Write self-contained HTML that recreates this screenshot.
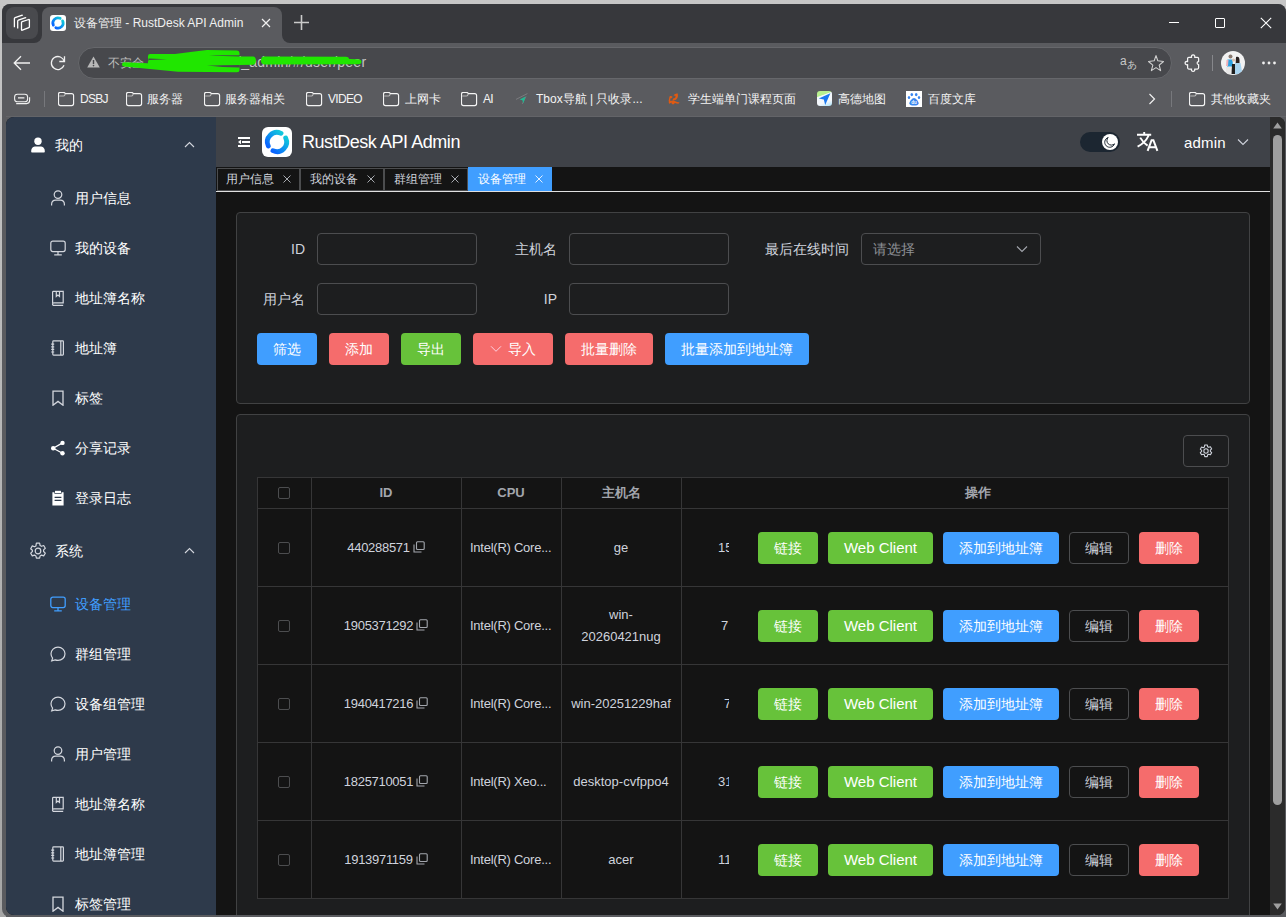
<!DOCTYPE html>
<html><head><meta charset="utf-8">
<style>
*{box-sizing:border-box;margin:0;padding:0}
html,body{width:1286px;height:917px;overflow:hidden;background:linear-gradient(#c6c6c6,#a6a6a6);font-family:"Liberation Sans",sans-serif;position:relative}
.a{position:absolute}
svg{display:block}
#win{left:2px;top:4px;width:1284px;height:913px;background:#5a5b5f;border-radius:8px 8px 0 8px;overflow:hidden}
#tabstrip{left:0;top:0;width:1284px;height:39px;background:#37383c}
#content{left:6px;top:117px;width:1279px;height:798px;background:#141414;border-radius:8px 8px 8px 8px;overflow:hidden}
.bm{color:#f4f4f4;font-size:12px;top:91px;line-height:16px;white-space:nowrap}
#side{left:0;top:0;width:210px;height:798px;background:#2e3a4b}
.mi{position:absolute;left:0;width:210px;height:50px;color:#fff;font-size:14px}
.mi span{position:absolute;left:69px;top:17px;line-height:16px;white-space:nowrap}
.mi svg{position:absolute;left:44px;top:17px}
#hdr{left:210px;top:0;width:1054px;height:50px;background:#3f4248}
#tabs{left:210px;top:50px;width:1054px;height:25px;background:#141414;border-bottom:1px solid #d9d9d9}
.tg{position:absolute;top:0;height:24px;border:1px solid #4c4d4f;background:#141414;color:#cfd3dc;font-size:12px;line-height:22px;padding-left:9px;white-space:nowrap}
.tg i{position:absolute;right:8px;top:6px;width:9px;height:9px}
.card{position:absolute;background:#1d1e1f;border:1px solid #414243;border-radius:4px}
.lbl{position:absolute;color:#cfd3dc;font-size:14px;line-height:16px;text-align:right;white-space:nowrap}
.inp{position:absolute;height:32px;border:1px solid #4c4d4f;border-radius:4px}
.btn{position:absolute;height:32px;border-radius:4px;color:#fff;font-size:14px;line-height:32px;text-align:center;white-space:nowrap}
.bp{background:#409eff}.bd{background:#f56c6c}.bs{background:#67c23a}
.bo{border:1px solid #4c4d4f;color:#cfd3dc;line-height:30px}
#sb{left:1264px;top:0;width:15px;height:798px;background:#2b2b2b;border-radius:0 6px 6px 0}
.cell{position:absolute;color:#cfd3dc;font-size:13px;line-height:22px;text-align:center;white-space:nowrap}
.hl{position:absolute;height:1px;background:#363637}
.vl{position:absolute;width:1px;background:#363637}
.st{color:#fff;font-size:14px;line-height:18px;white-space:nowrap}
.th{color:#a3a6ad;font-size:13px;font-weight:bold;line-height:16px;text-align:center;white-space:nowrap}
.idt{letter-spacing:-.3px}
.cb{position:absolute;width:12px;height:12px;border:1px solid #4c4d4f;border-radius:2px}
</style></head><body>
<div id="win" class="a">

  <div id="tabstrip" class="a"></div>
  <!-- group button -->
  <!-- active tab -->
  <div class="a" style="left:40px;top:3px;width:240px;height:40px;background:#5a5b5f;border-radius:8px 8px 0 0"></div>
  <div class="a" style="left:280px;top:31px;width:8px;height:8px;background:#5a5b5f"></div>
  <div class="a" style="left:280px;top:23px;width:16px;height:16px;background:#37383c;border-radius:0 0 0 8px"></div>
  <div class="a" style="left:32px;top:31px;width:8px;height:8px;background:#5a5b5f"></div>
  <div class="a" style="left:32px;top:31px;width:8px;height:8px;background:#37383c;border-radius:0 0 8px 0"></div>
  <div class="a" style="left:4px;top:3px;width:32px;height:32px;background:#494a4e;border-radius:8px"></div>
  <svg class="a" style="left:-2px;top:-4px" width="40" height="40" viewBox="0 0 40 40" fill="none" stroke="#fff" stroke-width="1.3" stroke-linejoin="round">
    <path d="M14.4 27.2V18.6Q14.4 17.9 15.1 17.6L21.6 15.3Q22.3 15.1 22.7 15.6"/><path d="M17.7 28.4V21.1Q17.7 20.4 18.4 20.1L24.9 17.8Q25.6 17.6 26 18.1"/><path d="M21.5 22.6Q21.5 21.9 22.2 21.7L28.7 19.5Q29.4 19.3 29.4 20V26.8Q29.4 27.4 28.8 27.6L22.4 30.2Q21.5 30.5 21.5 29.8Z"/>
  </svg>
  <!-- favicon -->
  <div class="a" style="left:48px;top:11px;width:16px;height:16px;background:#fff;border-radius:3px"></div>
  <svg class="a" style="left:48px;top:11px" width="16" height="16" viewBox="0 0 30 30"><defs><linearGradient id="lg0" x1="0" y1="1" x2="1" y2="0"><stop offset="0" stop-color="#0a62ff"/><stop offset="1" stop-color="#10c8dc"/></linearGradient></defs>
    <path d="M19.06 6.3A9.6 9.6 0 0 0 6.3 19.06" fill="none" stroke="url(#lg0)" stroke-width="5.2" stroke-linecap="round"/><path d="M10.94 23.7A9.6 9.6 0 0 0 23.7 10.94" fill="none" stroke="url(#lg0)" stroke-width="5.2" stroke-linecap="round"/>
  </svg>
  <div class="a" style="left:72px;top:12px;color:#f0f0f0;font-size:12px;line-height:14px;white-space:nowrap">设备管理 - RustDesk API Admin</div>
  <svg class="a" style="left:259px;top:14px" width="10" height="10" viewBox="0 0 10 10" stroke="#f0f0f0" stroke-width="1.2"><path d="M1 1l8 8M9 1L1 9"/></svg>
  <svg class="a" style="left:292px;top:11px" width="15" height="15" viewBox="0 0 15 15" stroke="#cacaca" stroke-width="1.6"><path d="M7.5 0v15M0 7.5h15"/></svg>
  <!-- window controls -->
  <div class="a" style="left:1167px;top:18px;width:10px;height:1px;background:#fff"></div>
  <div class="a" style="left:1213px;top:14px;width:10px;height:10px;border:1px solid #fff;border-radius:1px"></div>
  <svg class="a" style="left:1258px;top:13px" width="12" height="12" viewBox="0 0 12 12" stroke="#fff" stroke-width="1.1"><path d="M.8.8l10.4 10.4M11.2.8L.8 11.2"/></svg>
  <!-- toolbar -->
  <svg class="a" style="left:11px;top:51px" width="18" height="16" viewBox="0 0 18 16" fill="none" stroke="#f0f0f0" stroke-width="1.3"><path d="M17 8H1.5M8 1.2L1.2 8 8 14.8"/></svg>
  <svg class="a" style="left:48px;top:51px" width="16" height="16" viewBox="0 0 16 16" fill="none" stroke="#f0f0f0" stroke-width="1.3"><path d="M14.2 6.5A6.5 6.5 0 1 0 14 10.2"/><path d="M14.5 1.2V6.5H9.3"/></svg>
  <div class="a" style="left:76px;top:43px;width:1094px;height:32px;background:#47484c;border-radius:16px;border:1px solid #66676b"></div>
  <svg class="a" style="left:85px;top:52px" width="13" height="12" viewBox="0 0 13 12"><path d="M6.5 .5L12.8 11.5H.2z" fill="#b8b8b8"/><path d="M6.5 4v4" stroke="#47484c" stroke-width="1.4"/><circle cx="6.5" cy="9.6" r=".8" fill="#47484c"/></svg>
  <div class="a" style="left:106px;top:52px;color:#bdbdbd;font-size:12px;line-height:14px;white-space:nowrap">不安全</div>
  <div class="a" style="left:227px;top:50px;color:#c4c4c4;font-size:14px;line-height:16px;letter-spacing:.25px;white-space:nowrap">4/_admin/#/user/peer</div>
  <svg class="a" style="left:-2px;top:-4px" width="400" height="90" viewBox="0 0 400 90" fill="#20e600">
    <path d="M150 53.9L175 53.9Q190 52 207 50L237 50.5Q239.5 50.8 239.5 53V55.3H209Q222 56.2 239.5 56.6H253Q256 56.8 256 60.7Q256 64.6 253 64.8L239.5 65V70Q239.5 72.3 237 72.3L178 71.7L124 66.6Q122 66.4 122 64.4Q122 62.3 124 62.3L148 63.2Q147.5 61.5 148.5 60.2Q147.5 58.5 148 56.2Q148 53.9 150 53.9z"/>
    <path d="M148.6 58.4L167 59.3L148.6 60z" fill="#47484c"/><path d="M207 65.6Q220 64.9 239.6 64.9V67.6Q222 67.5 207 65.6z" fill="#47484c"/>
    <path d="M261 60.6Q261 56.8 264 56.6L346 56.8Q349 57 349 59L358 59.3Q361.5 59.5 361.5 61.8Q361.5 64.3 358 64.3L264 64.5Q261 64.3 261 60.6z"/>
  </svg>
  <div class="a" style="left:1118px;top:50px;color:#c8c8c8;font-size:12px;line-height:14px;white-space:nowrap">a</div>
  <div class="a" style="left:1125px;top:55px;color:#c8c8c8;font-size:10px;line-height:12px;white-space:nowrap">あ</div>
  <svg class="a" style="left:-2px;top:-4px" width="1286" height="90" viewBox="0 0 1286 90" fill="none" stroke="#f4f4f4" stroke-width="1.25" stroke-linejoin="round"><path d="M1188.8 57.3H1191.6A1.7 1.7 0 1 1 1194.6 57.3H1197.4Q1198.6 57.3 1198.6 58.5V61.6A1.5 1.5 0 1 0 1198.6 64.6V67.8Q1198.6 69 1197.4 69H1194.6A1.7 1.7 0 1 1 1191.6 69H1188.8Q1187.6 69 1187.6 67.8V64.6A1.7 1.7 0 1 1 1187.6 61.6V58.5Q1187.6 57.3 1188.8 57.3z"/>
  <path d="M1148.5 61.5L1154.2 60.8 1156 55.6 1157.8 60.8 1163.5 61.5 1159.2 65.2 1160.6 70.6 1156 67.6 1151.4 70.6 1152.8 65.2z" stroke="#d0d0d0" stroke-width="1.1"/></svg>
  <div class="a" style="left:1210px;top:51px;width:1px;height:16px;background:#86878b"></div>
  <svg class="a" style="left:1219px;top:47px" width="24" height="24" viewBox="0 0 24 24"><defs><clipPath id="cav"><circle cx="12" cy="12" r="12"/></clipPath></defs><g clip-path="url(#cav)"><rect width="24" height="24" fill="#f2f2f2"/>
  <circle cx="9.5" cy="5.5" r="2" fill="#8a7a70"/><path d="M6.5 8.5h5l.5 7h-6z" fill="#2aa0e0"/><path d="M5.5 9h2l-.5 6h-2z" fill="#f0b0b8"/><path d="M11 13h3l.5 10h-4z" fill="#1e1e1e"/>
  <path d="M15 6c2-1 3.5 0 3.5 3v6h-4z" fill="#2a2222"/><path d="M14 12h5.5l2 11H14z" fill="#a8d4f0"/><circle cx="12.5" cy="9" r="1.6" fill="#d8c0b0"/><path d="M5 16h5v7H5z" fill="#e8e8e8"/></g></svg>
  <svg class="a" style="left:1260px;top:57px" width="14" height="4" viewBox="0 0 14 4" fill="#f0f0f0"><circle cx="1.5" cy="2" r="1.4"/><circle cx="7" cy="2" r="1.4"/><circle cx="12.5" cy="2" r="1.4"/></svg>
  <!-- bookmarks -->
  <svg class="a" style="left:-2px;top:-4px" width="40" height="120" viewBox="0 0 40 120" fill="none" stroke="#f0f0f0" stroke-width="1.1"><rect x="14.6" y="94.2" width="13" height="7.6" rx="2.8"/><path d="M18 97.9h6.4" stroke-width="1.4"/><path d="M16.2 103.6H26.6A3 3 0 0 0 29.6 100.6V97.2"/></svg>
  <div class="a" style="left:42px;top:87px;width:1px;height:16px;background:#77787c"></div>
  <svg class="a" style="left:56px;top:88px" width="17" height="15" viewBox="0 0 17 15" fill="none" stroke="#f4f4f4" stroke-width="1.15"><path d="M.5 2.2Q.5.3 2.4.3H5.2Q6.6.3 7.3 1.6H13.6Q15.6 1.6 15.6 3.6V11.6Q15.6 13.6 13.6 13.6H2.5Q.5 13.6.5 11.6Z"/><path d="M1.2 4H5.6Q6.8 4 7.2 1.8" stroke="#b8b8b8"/></svg>
  <div class="a bm" style="left:78px;top:87px;letter-spacing:-.7px">DSBJ</div>
  <svg class="a" style="left:124px;top:88px" width="17" height="15" viewBox="0 0 17 15" fill="none" stroke="#f4f4f4" stroke-width="1.15"><path d="M.5 2.2Q.5.3 2.4.3H5.2Q6.6.3 7.3 1.6H13.6Q15.6 1.6 15.6 3.6V11.6Q15.6 13.6 13.6 13.6H2.5Q.5 13.6.5 11.6Z"/><path d="M1.2 4H5.6Q6.8 4 7.2 1.8" stroke="#b8b8b8"/></svg>
  <div class="a bm" style="left:145px;top:87px">服务器</div>
  <svg class="a" style="left:202px;top:88px" width="17" height="15" viewBox="0 0 17 15" fill="none" stroke="#f4f4f4" stroke-width="1.15"><path d="M.5 2.2Q.5.3 2.4.3H5.2Q6.6.3 7.3 1.6H13.6Q15.6 1.6 15.6 3.6V11.6Q15.6 13.6 13.6 13.6H2.5Q.5 13.6.5 11.6Z"/><path d="M1.2 4H5.6Q6.8 4 7.2 1.8" stroke="#b8b8b8"/></svg>
  <div class="a bm" style="left:223px;top:87px">服务器相关</div>
  <svg class="a" style="left:304px;top:88px" width="17" height="15" viewBox="0 0 17 15" fill="none" stroke="#f4f4f4" stroke-width="1.15"><path d="M.5 2.2Q.5.3 2.4.3H5.2Q6.6.3 7.3 1.6H13.6Q15.6 1.6 15.6 3.6V11.6Q15.6 13.6 13.6 13.6H2.5Q.5 13.6.5 11.6Z"/><path d="M1.2 4H5.6Q6.8 4 7.2 1.8" stroke="#b8b8b8"/></svg>
  <div class="a bm" style="left:326px;top:87px;letter-spacing:-.7px">VIDEO</div>
  <svg class="a" style="left:381px;top:88px" width="17" height="15" viewBox="0 0 17 15" fill="none" stroke="#f4f4f4" stroke-width="1.15"><path d="M.5 2.2Q.5.3 2.4.3H5.2Q6.6.3 7.3 1.6H13.6Q15.6 1.6 15.6 3.6V11.6Q15.6 13.6 13.6 13.6H2.5Q.5 13.6.5 11.6Z"/><path d="M1.2 4H5.6Q6.8 4 7.2 1.8" stroke="#b8b8b8"/></svg>
  <div class="a bm" style="left:403px;top:87px">上网卡</div>
  <svg class="a" style="left:459px;top:88px" width="17" height="15" viewBox="0 0 17 15" fill="none" stroke="#f4f4f4" stroke-width="1.15"><path d="M.5 2.2Q.5.3 2.4.3H5.2Q6.6.3 7.3 1.6H13.6Q15.6 1.6 15.6 3.6V11.6Q15.6 13.6 13.6 13.6H2.5Q.5 13.6.5 11.6Z"/><path d="M1.2 4H5.6Q6.8 4 7.2 1.8" stroke="#b8b8b8"/></svg>
  <div class="a bm" style="left:481px;top:87px;letter-spacing:-.7px">AI</div>

  <svg class="a" style="left:-2px;top:-4px" width="1000" height="120" viewBox="0 0 1000 120"><path d="M527.4 93.6L516 99.4" stroke="#7a7b7f" stroke-width="1"/><path d="M526 96.5L522.2 104" stroke="#76777b" stroke-width="1"/><path d="M525.6 96.6L519.6 99.4 522.4 100.2 523.2 103.4z" fill="#22b892"/>
  <path d="M677.5 93.2c.8 1.8.6 4-.6 5.6-1.2 1.6-3.2 2-4.6 1.4l1.2-2c.8.2 1.6-.2 2-1 .2-.6 0-1.4-.6-1.8l-1.4.6 1-1.8zM669.5 96.4c1.4-.6 2.6-.2 3.2.6l-1.6 1.4c-.4-.2-.8 0-.8.4v2.8h-1.8zM668.6 102.2c1.6-1.6 4-1.8 6-1.2 1.8.6 3.4 1.4 5 1.4l-1.2 1.4c-1.2 0-2.2-.4-3.4-.8l-1.8 1.4-1.8-.6.8-1c-1.2-.2-2 .2-2.6 1.2z" fill="#e05a12"/></svg>
  <div class="a bm" style="left:534px;top:87px">Tbox导航 | 只收录...</div>
  <div class="a bm" style="left:686px;top:87px">学生端单门课程页面</div>
  <div class="a" style="left:815px;top:87px;width:15px;height:15px;border-radius:3px;background:linear-gradient(160deg,#b8f090 0,#b8f090 28%,#f4f8fc 32%,#f4f8fc 70%,#a8e0f8 100%)"></div>
  <svg class="a" style="left:815px;top:87px" width="15" height="15" viewBox="0 0 15 15"><path d="M13.4 2.2L1.8 7.6l5 1 1.4 5.4z" fill="#1a78f0"/></svg>
  <div class="a bm" style="left:836px;top:87px">高德地图</div>
  <div class="a" style="left:904px;top:87px;width:16px;height:16px;background:#fff"></div>
  <svg class="a" style="left:904px;top:87px" width="16" height="16" viewBox="0 0 16 16" fill="#3a86f0"><ellipse cx="5.8" cy="3.6" rx="1.3" ry="1.6"/><ellipse cx="10.2" cy="3.6" rx="1.3" ry="1.6"/><ellipse cx="3" cy="6.6" rx="1.2" ry="1.5"/><ellipse cx="13" cy="6.6" rx="1.2" ry="1.5"/><path d="M8 7c-1.8 0-4.6 3.4-4.6 5.2 0 1.6 1.4 2.4 4.6 2.4s4.6-.8 4.6-2.4C12.6 10.4 9.8 7 8 7z"/><text x="8" y="13.2" font-size="4.5" fill="#fff" text-anchor="middle" font-family="Liberation Sans" font-weight="bold">du</text></svg>
  <div class="a bm" style="left:926px;top:87px">百度文库</div>
  <svg class="a" style="left:1146px;top:89px" width="8" height="12" viewBox="0 0 8 12" fill="none" stroke="#f0f0f0" stroke-width="1.2"><path d="M1.5 1l5 5-5 5"/></svg>
  <div class="a" style="left:1169px;top:87px;width:1px;height:16px;background:#77787c"></div>
  <svg class="a" style="left:1187px;top:88px" width="17" height="15" viewBox="0 0 17 15" fill="none" stroke="#f4f4f4" stroke-width="1.15"><path d="M.5 2.2Q.5.3 2.4.3H5.2Q6.6.3 7.3 1.6H13.6Q15.6 1.6 15.6 3.6V11.6Q15.6 13.6 13.6 13.6H2.5Q.5 13.6.5 11.6Z"/><path d="M1.2 4H5.6Q6.8 4 7.2 1.8" stroke="#b8b8b8"/></svg>
  <div class="a bm" style="left:1209px;top:87px">其他收藏夹</div>
</div>
<div id="content" class="a"></div>
<div class="a" style="left:6px;top:117px;width:210px;height:798px;background:#2e3a4b;border-radius:8px 0 0 8px"></div>
<div class="a" style="left:30px;top:137px"><svg width="16" height="16" viewBox="0 0 16 16" fill="#fff"><circle cx="8" cy="4.3" r="3.7"/><path d="M1.2 14.2C1.2 11 3.5 9.6 5.5 9.6h5c2 0 4.3 1.4 4.3 4.6v.3c0 .6-.4 1-1 1H2.2c-.6 0-1-.4-1-1z"/></svg></div><div class="a st" style="left:55px;top:136px;color:#fff">我的</div>
<svg class="a" style="left:184px;top:141px" width="11" height="7" viewBox="0 0 11 7" fill="none" stroke="#d4d7de" stroke-width="1.1"><path d="M1 6l4.5-4.5L10 6"/></svg>
<div class="a" style="left:50px;top:190px"><svg width="16" height="16" viewBox="0 0 16 16" fill="none" stroke="#d4d7de" stroke-width="1.2"><circle cx="8" cy="4.6" r="3.8"/><path d="M1.6 15.5v-1.2c0-2.4 1.8-4.2 4.2-4.2h4.4c2.4 0 4.2 1.8 4.2 4.2v1.2"/></svg></div><div class="a st" style="left:75px;top:189px;color:#fff">用户信息</div>
<div class="a" style="left:50px;top:240px"><svg width="16" height="16" viewBox="0 0 16 16" fill="none" stroke="#d4d7de" stroke-width="1.2"><rect x=".8" y="1.2" width="14.4" height="10.4" rx="2"/><path d="M8 11.6v3.2M4.2 14.8h7.6"/></svg></div><div class="a st" style="left:75px;top:239px;color:#fff">我的设备</div>
<div class="a" style="left:50px;top:290px"><svg width="16" height="16" viewBox="0 0 16 16" fill="none" stroke="#d4d7de" stroke-width="1.2"><path d="M2.6 13V2.2c0-.5.4-.8.8-.8h9.8v11.4H3.8a1.3 1.3 0 0 0 0 2.6h9.4"/><path d="M6.3 1.4v5l1.6-1.3 1.6 1.3v-5"/></svg></div><div class="a st" style="left:75px;top:289px;color:#fff">地址簿名称</div>
<div class="a" style="left:50px;top:340px"><svg width="16" height="16" viewBox="0 0 16 16" fill="none" stroke="#d4d7de" stroke-width="1.2"><rect x="2.8" y=".9" width="10.6" height="14.2" rx=".8"/><path d="M10.8 1v14M1.2 4.2h3M1.2 6.8h3M1.2 9.4h3M1.2 12h3"/></svg></div><div class="a st" style="left:75px;top:339px;color:#fff">地址簿</div>
<div class="a" style="left:50px;top:390px"><svg width="16" height="16" viewBox="0 0 16 16" fill="none" stroke="#d4d7de" stroke-width="1.3"><path d="M3 1.2h10v14l-5-3.8-5 3.8z"/></svg></div><div class="a st" style="left:75px;top:389px;color:#fff">标签</div>
<div class="a" style="left:50px;top:440px"><svg width="16" height="16" viewBox="0 0 16 16" fill="#fff"><circle cx="12.5" cy="2.9" r="2.2"/><circle cx="3.2" cy="8.2" r="2.2"/><circle cx="12.5" cy="13.3" r="2.2"/><path d="M3.2 8.2L12.5 2.9M3.2 8.2l9.3 5.1" stroke="#fff" stroke-width="1.3"/></svg></div><div class="a st" style="left:75px;top:439px;color:#fff">分享记录</div>
<div class="a" style="left:50px;top:490px"><svg width="16" height="16" viewBox="0 0 16 16" fill="#fff"><path d="M5 .8h6v2.2H5z"/><path d="M2.4 2.2h2v1.6h7.2V2.2h2v13.4H2.4z"/><path d="M4.6 7.4h6.8M4.6 10.4h6.8" stroke="#2e3a4b" stroke-width="1.3"/></svg></div><div class="a st" style="left:75px;top:489px;color:#fff">登录日志</div>
<div class="a" style="left:29px;top:542px"><svg width="18" height="18" viewBox="0 0 18 18" fill="none" stroke="#d4d7de" stroke-width="1.2"><path d="M7.4 1.2h3.2l.5 2.3 1.4.8 2.2-.8 1.6 2.8-1.7 1.6v1.6l1.7 1.6-1.6 2.8-2.2-.8-1.4.8-.5 2.3H7.4l-.5-2.3-1.4-.8-2.2.8-1.6-2.8 1.7-1.6V8.3L1.7 6.7l1.6-2.8 2.2.8 1.4-.8z" stroke-linejoin="round"/><circle cx="9" cy="9" r="2.8"/></svg></div><div class="a st" style="left:55px;top:542px">系统</div>
<svg class="a" style="left:184px;top:547px" width="11" height="7" viewBox="0 0 11 7" fill="none" stroke="#d4d7de" stroke-width="1.1"><path d="M1 6l4.5-4.5L10 6"/></svg>
<div class="a" style="left:50px;top:596px"><svg width="16" height="16" viewBox="0 0 16 16" fill="none" stroke="#409eff" stroke-width="1.3"><rect x=".8" y="1.2" width="14.4" height="10.4" rx="2"/><path d="M8 11.6v3.2M4.2 14.8h7.6"/></svg></div><div class="a st" style="left:75px;top:595px;color:#409eff">设备管理</div>
<div class="a" style="left:50px;top:646px"><svg width="16" height="16" viewBox="0 0 16 16" fill="none" stroke="#d4d7de" stroke-width="1.2"><path d="M8 1.2c3.9 0 7 2.8 7 6.6s-3.1 6.6-7 6.6c-1 0-2-.2-2.9-.5l-3.4 1 .9-2.7C1.7 11 1 9.5 1 7.8 1 4 4.1 1.2 8 1.2z"/></svg></div><div class="a st" style="left:75px;top:645px;color:#fff">群组管理</div>
<div class="a" style="left:50px;top:696px"><svg width="16" height="16" viewBox="0 0 16 16" fill="none" stroke="#d4d7de" stroke-width="1.2"><path d="M8 1.2c3.9 0 7 2.8 7 6.6s-3.1 6.6-7 6.6c-1 0-2-.2-2.9-.5l-3.4 1 .9-2.7C1.7 11 1 9.5 1 7.8 1 4 4.1 1.2 8 1.2z"/></svg></div><div class="a st" style="left:75px;top:695px;color:#fff">设备组管理</div>
<div class="a" style="left:50px;top:746px"><svg width="16" height="16" viewBox="0 0 16 16" fill="none" stroke="#d4d7de" stroke-width="1.2"><circle cx="8" cy="4.6" r="3.8"/><path d="M1.6 15.5v-1.2c0-2.4 1.8-4.2 4.2-4.2h4.4c2.4 0 4.2 1.8 4.2 4.2v1.2"/></svg></div><div class="a st" style="left:75px;top:745px;color:#fff">用户管理</div>
<div class="a" style="left:50px;top:796px"><svg width="16" height="16" viewBox="0 0 16 16" fill="none" stroke="#d4d7de" stroke-width="1.2"><path d="M2.6 13V2.2c0-.5.4-.8.8-.8h9.8v11.4H3.8a1.3 1.3 0 0 0 0 2.6h9.4"/><path d="M6.3 1.4v5l1.6-1.3 1.6 1.3v-5"/></svg></div><div class="a st" style="left:75px;top:795px;color:#fff">地址簿名称</div>
<div class="a" style="left:50px;top:846px"><svg width="16" height="16" viewBox="0 0 16 16" fill="none" stroke="#d4d7de" stroke-width="1.2"><rect x="2.8" y=".9" width="10.6" height="14.2" rx=".8"/><path d="M10.8 1v14M1.2 4.2h3M1.2 6.8h3M1.2 9.4h3M1.2 12h3"/></svg></div><div class="a st" style="left:75px;top:845px;color:#fff">地址簿管理</div>
<div class="a" style="left:50px;top:896px"><svg width="16" height="16" viewBox="0 0 16 16" fill="none" stroke="#d4d7de" stroke-width="1.3"><path d="M3 1.2h10v14l-5-3.8-5 3.8z"/></svg></div><div class="a st" style="left:75px;top:895px;color:#fff">标签管理</div>
<div class="a" style="left:216px;top:117px;width:1054px;height:50px;background:#3f4248"></div>
<svg class="a" style="left:237px;top:136px" width="14" height="12" viewBox="0 0 14 12" fill="#fff"><rect x="1" y="1" width="12" height="2"/><rect x="5" y="5" width="8" height="2"/><rect x="1" y="9" width="12" height="2"/><path d="M1 6l3-2.2v4.4z"/></svg>
<div class="a" style="left:262px;top:127px;width:30px;height:30px;background:#fff;border-radius:6px"></div>
<svg class="a" style="left:262px;top:127px" width="30" height="30" viewBox="0 0 30 30"><defs><linearGradient id="lg1" x1="0" y1="1" x2="1" y2="0"><stop offset="0" stop-color="#0a62ff"/><stop offset="1" stop-color="#10c8dc"/></linearGradient></defs>
<path d="M19.06 6.3A9.6 9.6 0 0 0 6.3 19.06" fill="none" stroke="url(#lg1)" stroke-width="4.8" stroke-linecap="round"/>
<path d="M10.94 23.7A9.6 9.6 0 0 0 23.7 10.94" fill="none" stroke="url(#lg1)" stroke-width="4.8" stroke-linecap="round"/></svg>
<div class="a" style="left:302px;top:132px;color:#fff;font-size:18px;line-height:20px;letter-spacing:-.45px;white-space:nowrap">RustDesk API Admin</div>
<div class="a" style="left:1080px;top:132px;width:40px;height:20px;background:#1c2631;border-radius:10px"></div>
<div class="a" style="left:1102px;top:134px;width:16px;height:16px;background:#fff;border-radius:50%"></div>
<svg class="a" style="left:1102px;top:134px" width="16" height="16" viewBox="0 0 16 16" fill="none" stroke="#1c2631" stroke-width="1"><path d="M6.2 3.5a5 5 0 1 0 6.3 6.3 4.2 4.2 0 0 1-6.3-6.3z"/></svg>
<svg class="a" style="left:1130px;top:126px" width="34" height="30" viewBox="1130 126 34 30" fill="none" stroke="#fff" stroke-width="1.9"><path d="M1144.2 132v2.6M1137 134.8h14.2M1148.6 135.6Q1145 143 1137.6 146.6M1140.2 137.6Q1143 142.5 1147.6 145.6"/><path d="M1147.6 150.8L1151.6 140.2h1.8l4 10.6M1149.2 147.2h6.6" stroke-width="2"/></svg>
<div class="a" style="left:1184px;top:134px;color:#fff;font-size:15px;line-height:18px;letter-spacing:.2px;white-space:nowrap">admin</div>
<svg class="a" style="left:1237px;top:138px" width="12" height="8" viewBox="0 0 12 8" fill="none" stroke="#cfd3dc" stroke-width="1.1"><path d="M1 1.5l5 5 5-5"/></svg>
<div class="a" style="left:216px;top:167px;width:1054px;height:25px;background:#141414;border-bottom:1px solid #e0e0e0"></div>
<div class="a" style="left:217px;top:168px;width:83px;height:23px;background:#141414;border:1px solid #4c4d4f"></div><div class="a" style="left:226px;top:172px;color:#cfd3dc;font-size:12px;line-height:14px;white-space:nowrap">用户信息</div><svg class="a" style="left:283px;top:175px" width="8" height="8" viewBox="0 0 8 8" stroke="#b8bbc2" stroke-width=".9"><path d="M.5.5l7 7M7.5.5l-7 7"/></svg>
<div class="a" style="left:300px;top:168px;width:84px;height:23px;background:#141414;border:1px solid #4c4d4f"></div><div class="a" style="left:310px;top:172px;color:#cfd3dc;font-size:12px;line-height:14px;white-space:nowrap">我的设备</div><svg class="a" style="left:367px;top:175px" width="8" height="8" viewBox="0 0 8 8" stroke="#b8bbc2" stroke-width=".9"><path d="M.5.5l7 7M7.5.5l-7 7"/></svg>
<div class="a" style="left:384px;top:168px;width:84px;height:23px;background:#141414;border:1px solid #4c4d4f"></div><div class="a" style="left:394px;top:172px;color:#cfd3dc;font-size:12px;line-height:14px;white-space:nowrap">群组管理</div><svg class="a" style="left:451px;top:175px" width="8" height="8" viewBox="0 0 8 8" stroke="#b8bbc2" stroke-width=".9"><path d="M.5.5l7 7M7.5.5l-7 7"/></svg>
<div class="a" style="left:468px;top:167px;width:84px;height:24px;background:#409eff"></div><div class="a" style="left:478px;top:172px;color:#fff;font-size:12px;line-height:14px;white-space:nowrap">设备管理</div><svg class="a" style="left:535px;top:175px" width="8" height="8" viewBox="0 0 8 8" stroke="#f4f8ff" stroke-width=".9"><path d="M.5.5l7 7M7.5.5l-7 7"/></svg>
<div class="a" style="left:1270px;top:117px;width:15px;height:798px;background:#2b2b2b;border-radius:0 7px 7px 0"></div>
<svg class="a" style="left:1273px;top:122px" width="9" height="7" viewBox="0 0 9 7" fill="#9f9f9f"><path d="M4.5 .5L8.8 6.5H.2z"/></svg>
<div class="a" style="left:1273px;top:135px;width:9px;height:670px;background:#9f9f9f;border-radius:4.5px"></div>
<svg class="a" style="left:1273px;top:903px" width="9" height="7" viewBox="0 0 9 7" fill="#9f9f9f"><path d="M4.5 6.5L8.8 .5H.2z"/></svg>
<div class="card" style="left:236px;top:212px;width:1014px;height:192px"></div>
<div class="lbl" style="left:200px;top:241px;width:105px">ID</div>
<div class="inp" style="left:317px;top:233px;width:160px"></div>
<div class="lbl" style="left:450px;top:241px;width:107px">主机名</div>
<div class="inp" style="left:569px;top:233px;width:160px"></div>
<div class="lbl" style="left:700px;top:241px;width:149px">最后在线时间</div>
<div class="inp" style="left:861px;top:233px;width:180px"></div>
<div class="a" style="left:873px;top:241px;color:#8d9095;font-size:14px;line-height:16px">请选择</div>
<svg class="a" style="left:1016px;top:245px" width="12" height="8" viewBox="0 0 12 8" fill="none" stroke="#a3a6ad" stroke-width="1.1"><path d="M1 1.5l5 5 5-5"/></svg>
<div class="lbl" style="left:200px;top:291px;width:105px">用户名</div>
<div class="inp" style="left:317px;top:283px;width:160px"></div>
<div class="lbl" style="left:450px;top:291px;width:107px">IP</div>
<div class="inp" style="left:569px;top:283px;width:160px"></div>
<div class="btn bp" style="left:257px;top:333px;width:60px">筛选</div>
<div class="btn bd" style="left:329px;top:333px;width:60px">添加</div>
<div class="btn bs" style="left:401px;top:333px;width:60px">导出</div>
<div class="btn bd" style="left:473px;top:333px;width:80px"><span style="padding-left:18px">导入</span></div>
<div class="btn bd" style="left:565px;top:333px;width:88px">批量删除</div>
<div class="btn bp" style="left:665px;top:333px;width:144px">批量添加到地址簿</div>
<svg class="a" style="left:490px;top:345px" width="12" height="8" viewBox="0 0 12 8" fill="none" stroke="#fde" stroke-width=".9"><path d="M1 1.3l5 5 5-5"/></svg>
<div class="card" style="left:236px;top:414px;width:1014px;height:600px"></div>
<div class="a" style="left:1183px;top:435px;width:46px;height:32px;border:1px solid #4c4d4f;border-radius:4px"></div>
<svg class="a" style="left:1199px;top:444px" width="14" height="14" viewBox="0 0 18 18" fill="none" stroke="#cfd3dc" stroke-width="1.4"><path d="M7.4 1.2h3.2l.5 2.3 1.4.8 2.2-.8 1.6 2.8-1.7 1.6v1.6l1.7 1.6-1.6 2.8-2.2-.8-1.4.8-.5 2.3H7.4l-.5-2.3-1.4-.8-2.2.8-1.6-2.8 1.7-1.6V8.3L1.7 6.7l1.6-2.8 2.2.8 1.4-.8z" stroke-linejoin="round"/><circle cx="9" cy="9" r="2.8"/></svg>
<div class="a" style="left:257px;top:477px;width:972px;height:422px;background:#141414"></div>
<div class="hl" style="left:257px;top:477px;width:972px"></div>
<div class="hl" style="left:257px;top:508px;width:972px"></div>
<div class="hl" style="left:257px;top:586px;width:972px"></div>
<div class="hl" style="left:257px;top:664px;width:972px"></div>
<div class="hl" style="left:257px;top:742px;width:972px"></div>
<div class="hl" style="left:257px;top:820px;width:972px"></div>
<div class="hl" style="left:257px;top:898px;width:972px"></div>
<div class="vl" style="left:257px;top:477px;height:422px"></div>
<div class="vl" style="left:311px;top:477px;height:422px"></div>
<div class="vl" style="left:461px;top:477px;height:422px"></div>
<div class="vl" style="left:561px;top:477px;height:422px"></div>
<div class="vl" style="left:681px;top:477px;height:422px"></div>
<div class="vl" style="left:1228px;top:477px;height:422px"></div>
<div class="cb" style="left:278px;top:487px"></div>
<div class="a th" style="left:326px;top:485px;width:120px">ID</div>
<div class="a th" style="left:451px;top:485px;width:120px">CPU</div>
<div class="a th" style="left:561px;top:485px;width:120px">主机名</div>
<div class="a th" style="left:918px;top:485px;width:120px">操作</div>
<div class="cb" style="left:278px;top:542px"></div>
<div class="a cell" style="left:311px;top:537px;width:150px"><span class="idt">440288571</span><svg style="display:inline-block;vertical-align:-1px;margin-left:3px" width="12" height="12" viewBox="0 0 12 12" fill="none" stroke="#a3a6ad" stroke-width="1.1"><rect x="3.5" y=".8" width="7.7" height="7.7" rx="1"/><path d="M1 3.5v7.5h7.5"/></svg></div>
<div class="a cell" style="letter-spacing:-.25px;left:470px;top:537px;text-align:left">Intel(R) Core...</div>
<div class="a cell" style="left:561px;top:537px;width:120px">ge</div>
<div class="a" style="left:690px;top:537px;width:39px;height:22px;overflow:hidden"><div class="cell" style="left:28px;top:0">15</div></div>
<div class="btn bs" style="left:758px;top:532px;width:60px">链接</div>
<div class="btn bs" style="left:828px;top:532px;width:105px"><span style="font-size:15px">Web Client</span></div>
<div class="btn bp" style="left:943px;top:532px;width:116px">添加到地址簿</div>
<div class="btn bo" style="left:1069px;top:532px;width:60px">编辑</div>
<div class="btn bd" style="left:1139px;top:532px;width:60px">删除</div>
<div class="cb" style="left:278px;top:620px"></div>
<div class="a cell" style="left:311px;top:615px;width:150px"><span class="idt">1905371292</span><svg style="display:inline-block;vertical-align:-1px;margin-left:3px" width="12" height="12" viewBox="0 0 12 12" fill="none" stroke="#a3a6ad" stroke-width="1.1"><rect x="3.5" y=".8" width="7.7" height="7.7" rx="1"/><path d="M1 3.5v7.5h7.5"/></svg></div>
<div class="a cell" style="letter-spacing:-.25px;left:470px;top:615px;text-align:left">Intel(R) Core...</div>
<div class="a cell" style="left:561px;top:604px;width:120px">win-<br>20260421nug</div>
<div class="a" style="left:690px;top:615px;width:39px;height:22px;overflow:hidden"><div class="cell" style="left:31px;top:0">7</div></div>
<div class="btn bs" style="left:758px;top:610px;width:60px">链接</div>
<div class="btn bs" style="left:828px;top:610px;width:105px"><span style="font-size:15px">Web Client</span></div>
<div class="btn bp" style="left:943px;top:610px;width:116px">添加到地址簿</div>
<div class="btn bo" style="left:1069px;top:610px;width:60px">编辑</div>
<div class="btn bd" style="left:1139px;top:610px;width:60px">删除</div>
<div class="cb" style="left:278px;top:698px"></div>
<div class="a cell" style="left:311px;top:693px;width:150px"><span class="idt">1940417216</span><svg style="display:inline-block;vertical-align:-1px;margin-left:3px" width="12" height="12" viewBox="0 0 12 12" fill="none" stroke="#a3a6ad" stroke-width="1.1"><rect x="3.5" y=".8" width="7.7" height="7.7" rx="1"/><path d="M1 3.5v7.5h7.5"/></svg></div>
<div class="a cell" style="letter-spacing:-.25px;left:470px;top:693px;text-align:left">Intel(R) Core...</div>
<div class="a cell" style="left:561px;top:693px;width:120px">win-20251229haf</div>
<div class="a" style="left:690px;top:693px;width:39px;height:22px;overflow:hidden"><div class="cell" style="left:34px;top:0">7</div></div>
<div class="btn bs" style="left:758px;top:688px;width:60px">链接</div>
<div class="btn bs" style="left:828px;top:688px;width:105px"><span style="font-size:15px">Web Client</span></div>
<div class="btn bp" style="left:943px;top:688px;width:116px">添加到地址簿</div>
<div class="btn bo" style="left:1069px;top:688px;width:60px">编辑</div>
<div class="btn bd" style="left:1139px;top:688px;width:60px">删除</div>
<div class="cb" style="left:278px;top:776px"></div>
<div class="a cell" style="left:311px;top:771px;width:150px"><span class="idt">1825710051</span><svg style="display:inline-block;vertical-align:-1px;margin-left:3px" width="12" height="12" viewBox="0 0 12 12" fill="none" stroke="#a3a6ad" stroke-width="1.1"><rect x="3.5" y=".8" width="7.7" height="7.7" rx="1"/><path d="M1 3.5v7.5h7.5"/></svg></div>
<div class="a cell" style="letter-spacing:-.25px;left:470px;top:771px;text-align:left">Intel(R) Xeo...</div>
<div class="a cell" style="left:561px;top:771px;width:120px">desktop-cvfppo4</div>
<div class="a" style="left:690px;top:771px;width:39px;height:22px;overflow:hidden"><div class="cell" style="left:28px;top:0">31</div></div>
<div class="btn bs" style="left:758px;top:766px;width:60px">链接</div>
<div class="btn bs" style="left:828px;top:766px;width:105px"><span style="font-size:15px">Web Client</span></div>
<div class="btn bp" style="left:943px;top:766px;width:116px">添加到地址簿</div>
<div class="btn bo" style="left:1069px;top:766px;width:60px">编辑</div>
<div class="btn bd" style="left:1139px;top:766px;width:60px">删除</div>
<div class="cb" style="left:278px;top:854px"></div>
<div class="a cell" style="left:311px;top:849px;width:150px"><span class="idt">1913971159</span><svg style="display:inline-block;vertical-align:-1px;margin-left:3px" width="12" height="12" viewBox="0 0 12 12" fill="none" stroke="#a3a6ad" stroke-width="1.1"><rect x="3.5" y=".8" width="7.7" height="7.7" rx="1"/><path d="M1 3.5v7.5h7.5"/></svg></div>
<div class="a cell" style="letter-spacing:-.25px;left:470px;top:849px;text-align:left">Intel(R) Core...</div>
<div class="a cell" style="left:561px;top:849px;width:120px">acer</div>
<div class="a" style="left:690px;top:849px;width:39px;height:22px;overflow:hidden"><div class="cell" style="left:28px;top:0">11</div></div>
<div class="btn bs" style="left:758px;top:844px;width:60px">链接</div>
<div class="btn bs" style="left:828px;top:844px;width:105px"><span style="font-size:15px">Web Client</span></div>
<div class="btn bp" style="left:943px;top:844px;width:116px">添加到地址簿</div>
<div class="btn bo" style="left:1069px;top:844px;width:60px">编辑</div>
<div class="btn bd" style="left:1139px;top:844px;width:60px">删除</div>

<div class="a" style="left:6px;top:915px;width:1280px;height:2px;background:#5a5b5f"></div>
<div class="a" style="left:6px;top:116px;width:1280px;height:1px;background:#636468"></div>
</body></html>
